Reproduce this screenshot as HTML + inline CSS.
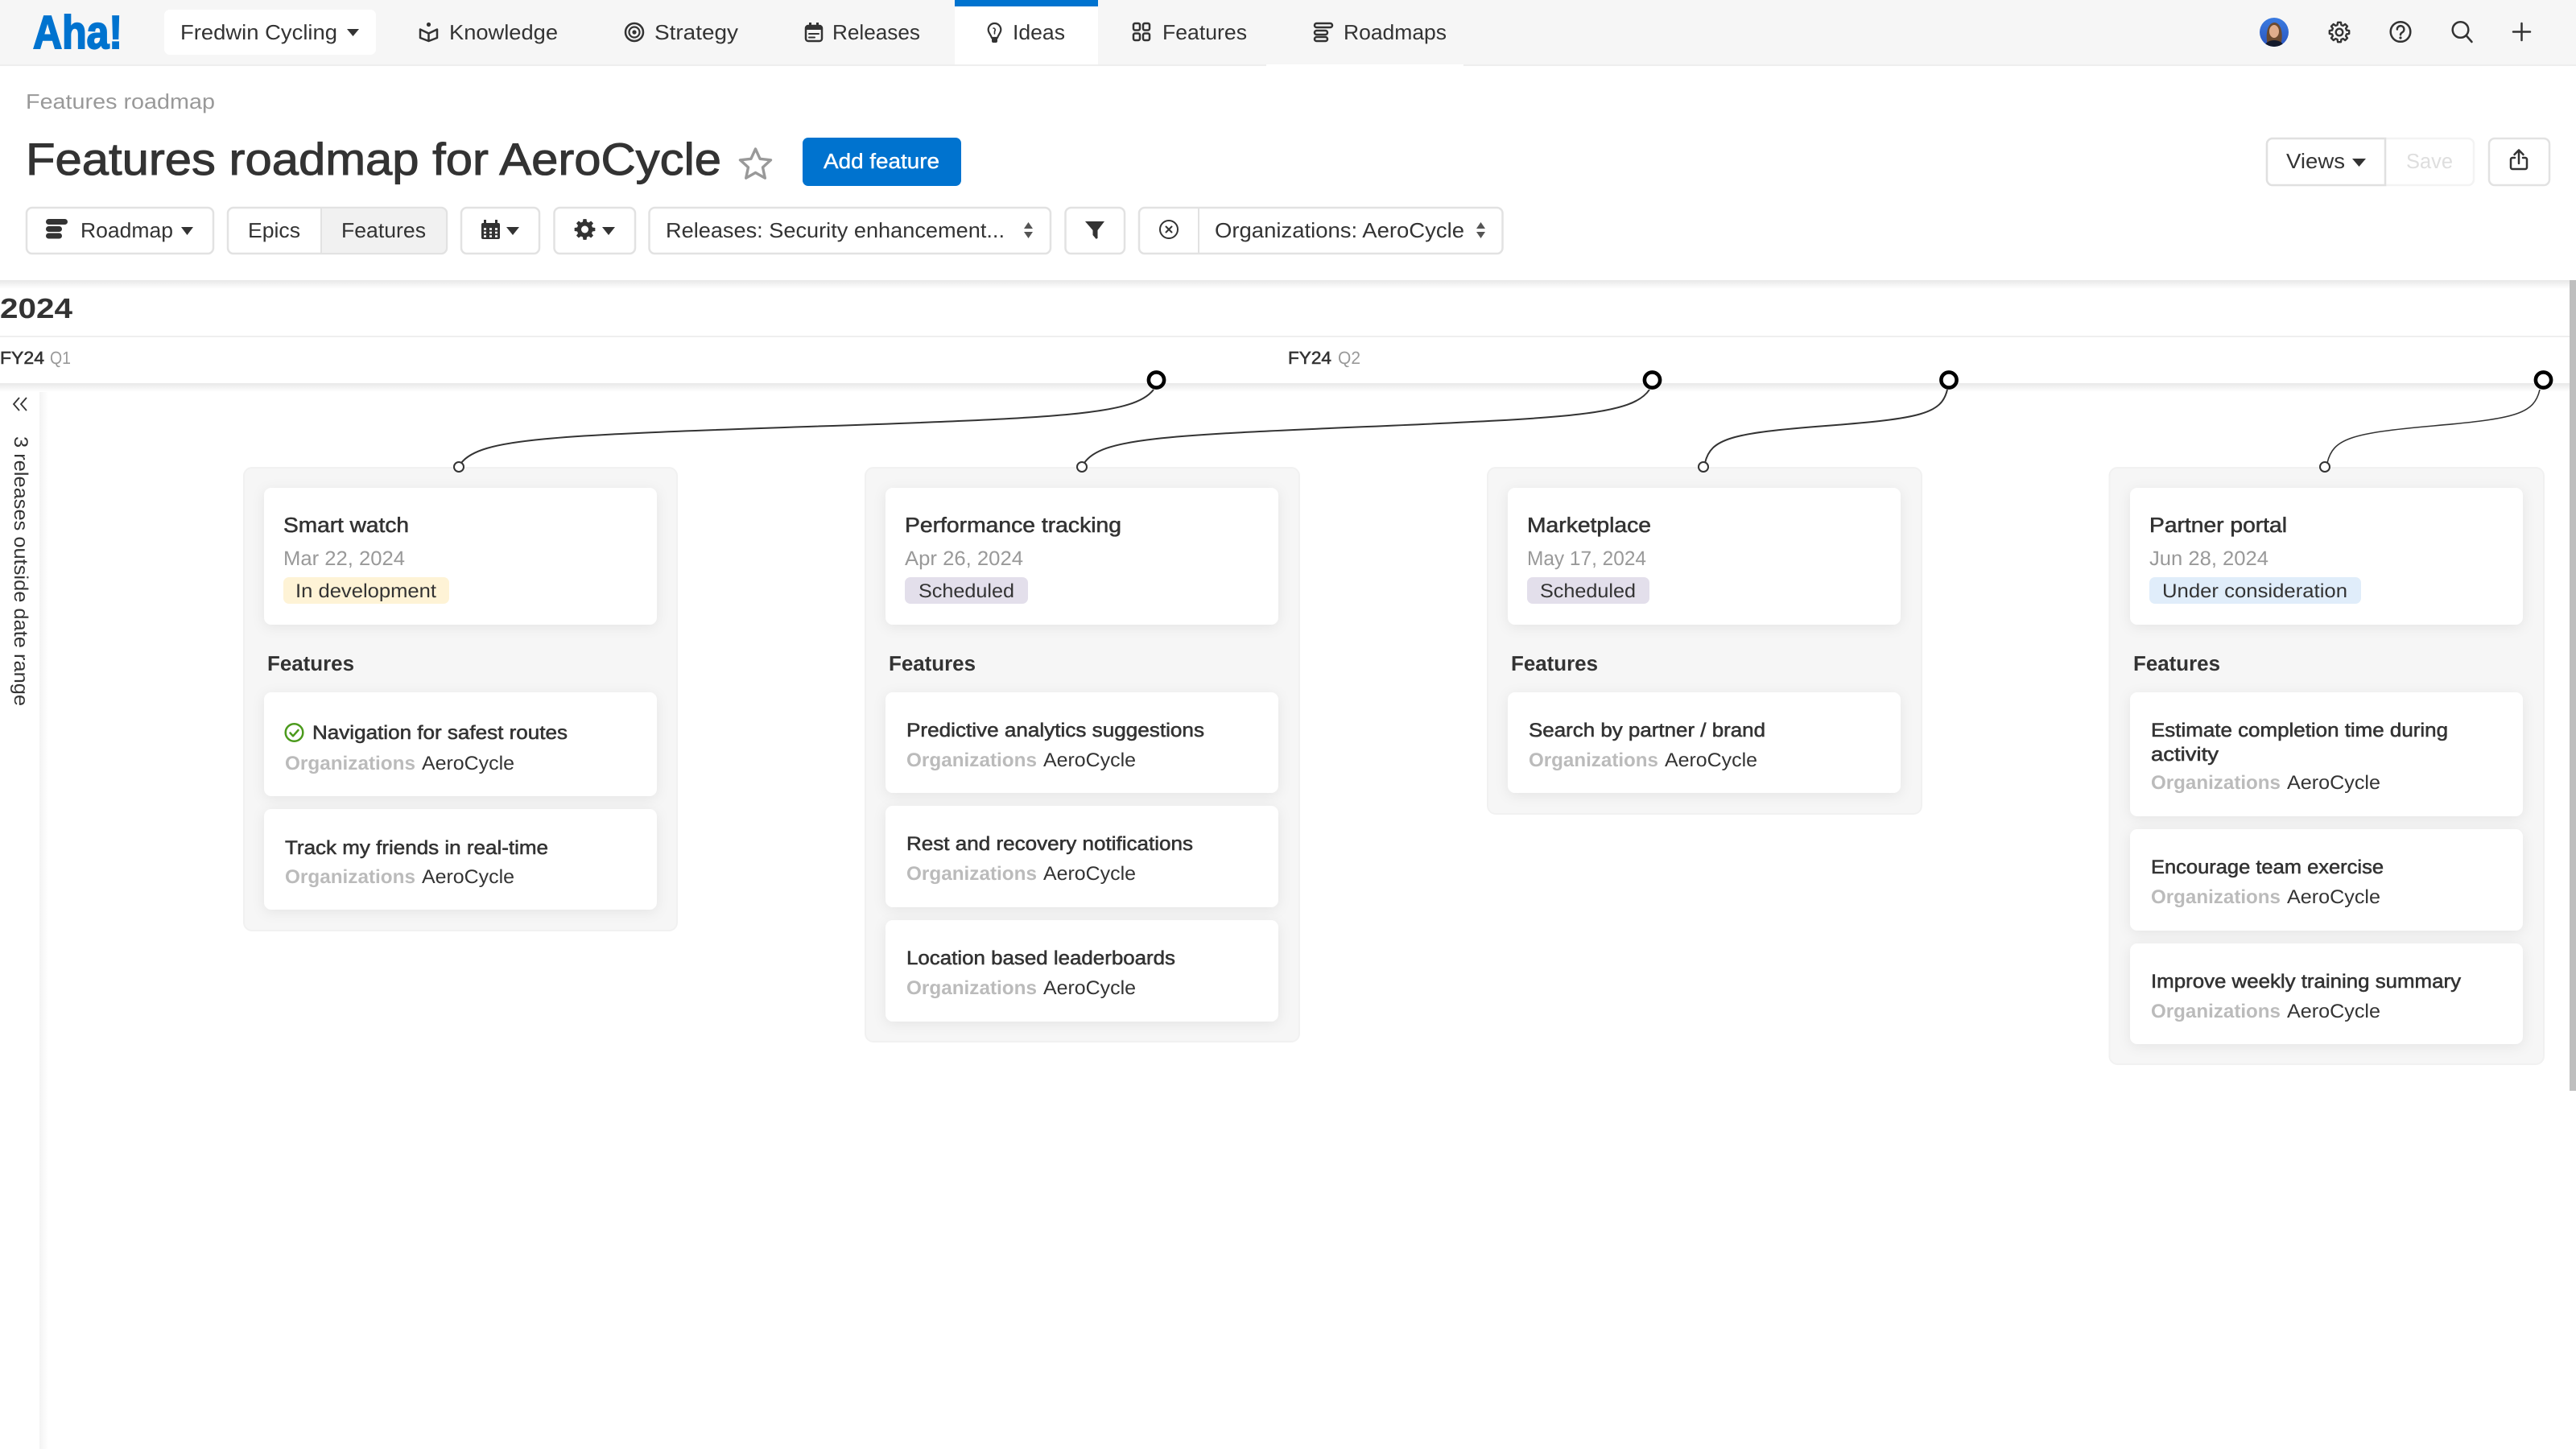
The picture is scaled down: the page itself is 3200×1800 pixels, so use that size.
<!DOCTYPE html>
<html lang="en">
<head>
<meta charset="utf-8">
<title>Features roadmap</title>
<style>
html,body{margin:0;padding:0;background:#fff;width:3200px;height:1800px;overflow:hidden}
svg{display:block;position:absolute;left:0;top:0}
text{font-family:"Liberation Sans",sans-serif;fill:#333;font-size:26px;text-rendering:geometricPrecision;white-space:pre}
.m{stroke:#333;stroke-width:.55px}
.b{font-weight:700}
.f{font-size:24px}
.g{fill:#999}
.o{fill:#bbb;font-weight:700;font-size:24px}
.grp{fill:#f6f6f6;stroke:#f1f1f1;stroke-width:2}
.card{fill:#fff;filter:drop-shadow(0 3px 8px rgba(0,0,0,.07))}
.btn{fill:#fff;stroke:#e2e2e2;stroke-width:2.5}
.ic{fill:none;stroke:#333;stroke-width:2.5;stroke-linecap:round;stroke-linejoin:round}
.fl{fill:#333}
.cv{fill:none;stroke:#333;stroke-width:2}
.big{fill:#fff;stroke:#000;stroke-width:4.6}
.sm{fill:#fff;stroke:#333;stroke-width:2}
</style>
</head>
<body>
<svg width="3200" height="1800" viewBox="0 0 3200 1800" xmlns="http://www.w3.org/2000/svg">
<defs>
<linearGradient id="sh" x1="0" y1="0" x2="0" y2="1"><stop offset="0" stop-color="#e8e8e8"/><stop offset="1" stop-color="#fff"/></linearGradient>
<linearGradient id="sh2" x1="0" y1="0" x2="1" y2="0"><stop offset="0" stop-color="#f3f3f3"/><stop offset="1" stop-color="#fff"/></linearGradient>
<linearGradient id="av" x1="0" y1="0" x2="0" y2="1"><stop offset="0" stop-color="#3a7be0"/><stop offset="1" stop-color="#2a55c0"/></linearGradient>
<clipPath id="avc"><circle cx="2825" cy="40" r="18"/></clipPath>
</defs>

<!-- nav -->
<rect x="0" y="0" width="3200" height="82" fill="#f6f6f6"/>
<rect x="0" y="80" width="3200" height="2" fill="#eeeeee"/>
<rect x="1573" y="80" width="245" height="2" fill="#fff"/>
<rect x="1186" y="0" width="178" height="80" fill="#fff"/>
<rect x="1186" y="0" width="178" height="8" fill="#0073cf"/>
<text x="41" y="60" textLength="111" lengthAdjust="spacingAndGlyphs" class="b" style="font-size:58px;fill:#0073cf;stroke:#0073cf;stroke-width:2px">Aha!</text>
<rect x="204" y="12" width="263" height="56" rx="7" fill="#fff"/>
<text x="224" y="49" textLength="195" lengthAdjust="spacingAndGlyphs">Fredwin Cycling</text>
<path class="fl" d="M431,36h15l-7.500,9z"/>

<path class="ic" d="M522,36.500l10.500,5 10.500,-5v10.500l-10.500,4 -10.500,-4zM532.500,41.500v9"/><circle class="fl" cx="532.500" cy="30.500" r="2.600"/>
<text x="558" y="49" textLength="135" lengthAdjust="spacingAndGlyphs">Knowledge</text>

<circle class="ic" cx="788" cy="40" r="11"/><circle class="ic" cx="788" cy="40" r="6.500" style="stroke-width:2.200"/><circle class="fl" cx="788" cy="40" r="2.600"/>
<text x="813" y="49" textLength="104" lengthAdjust="spacingAndGlyphs">Strategy</text>

<rect class="ic" x="1001" y="32" width="20" height="19" rx="3"/><path class="fl" d="M1001,32h20v5h-20zM1005,28h3v5h-3zM1014,28h3v5h-3z"/><path class="ic" style="stroke-width:2" d="M1005,42h12M1005,46.500h7"/>
<text x="1034" y="49" textLength="109" lengthAdjust="spacingAndGlyphs">Releases</text>

<path class="ic" style="stroke-width:2.200" d="M1235.500,29a7.800,7.800 0 0 0 -7.800,8c0,3.800 3.200,6 4.300,10h7c1.100,-4 4.300,-6.200 4.300,-10a7.800,7.800 0 0 0 -7.800,-8z"/><path class="fl" d="M1232,47h7v4a2,2 0 0 1 -2,2h-3a2,2 0 0 1 -2,-2z"/><path class="ic" style="stroke-width:1.600" d="M1234,35c2,0 3,2 1.500,4l0,3"/>
<text x="1258" y="49" textLength="65" lengthAdjust="spacingAndGlyphs">Ideas</text>

<rect class="ic" x="1408" y="29" width="8" height="8.500" rx="2"/><rect class="ic" x="1420" y="29" width="8" height="8.500" rx="2"/><rect class="ic" x="1408" y="41.500" width="8" height="8.500" rx="2"/><rect class="ic" x="1420" y="41.500" width="8" height="8.500" rx="2"/>
<text x="1444" y="49" textLength="105" lengthAdjust="spacingAndGlyphs">Features</text>

<rect class="ic" x="1633" y="29" width="22" height="5" rx="2.500"/><rect class="ic" x="1633" y="38" width="16" height="5" rx="2.500"/><rect class="ic" x="1633" y="46" width="16" height="5" rx="2.500"/>
<text x="1669" y="49" textLength="128" lengthAdjust="spacingAndGlyphs">Roadmaps</text>

<!-- right nav icons -->
<g clip-path="url(#avc)">
<rect x="2807" y="22" width="36" height="36" fill="url(#av)"/>
<path fill="#6b4a30" d="M2817,56c-3,-12 -1,-27 8,-28c9,0 12,15 8,28z"/>
<ellipse cx="2825" cy="39" rx="6" ry="8" fill="#e0ad8c"/>
<path fill="#141a2c" d="M2812,60c1,-7 7,-10 13,-10s12,3 13,10z"/>
</g>
<g transform="translate(2906,40) scale(.95)"><path class="ic" d="M9.470,-2.540L12.840,-2.030L12.840,2.030L9.470,2.540L8.490,4.900L10.520,7.640L7.640,10.520L4.900,8.490L2.540,9.470L2.030,12.840L-2.030,12.840L-2.540,9.470L-4.900,8.490L-7.640,10.520L-10.520,7.640L-8.490,4.900L-9.470,2.540L-12.840,2.030L-12.840,-2.030L-9.470,-2.540L-8.490,-4.900L-10.520,-7.640L-7.640,-10.520L-4.900,-8.490L-2.540,-9.470L-2.030,-12.840L2.030,-12.840L2.540,-9.470L4.900,-8.490L7.640,-10.520L10.520,-7.640L8.490,-4.900Z"/><circle class="ic" r="4.500"/></g>
<circle class="ic" cx="2982" cy="39.500" r="12.300"/><path class="ic" d="M2977.800,36.500a4.300,4.300 0 1 1 6.400,3.700c-1.400,.8 -2.200,1.500 -2.200,3"/><circle class="fl" cx="2982" cy="47" r="1.600"/>
<circle class="ic" cx="3056.500" cy="37" r="9.800"/><path class="ic" d="M3063.500,44l7,8"/>
<path class="ic" d="M3132.500,29v21M3122,39.500h21"/>

<!-- breadcrumb + title -->
<text x="32" y="135" textLength="235" lengthAdjust="spacingAndGlyphs" class="g">Features roadmap</text>
<text x="32" y="217" textLength="864" lengthAdjust="spacingAndGlyphs" style="font-size:56px;stroke:#333;stroke-width:1px">Features roadmap for AeroCycle</text>
<path d="M938.500,185L944.100,197.300L957.500,198.800L947.500,207.900L950.300,221.200L938.500,214.500L926.700,221.200L929.500,207.900L919.500,198.800L932.900,197.300Z" fill="none" stroke="#999" stroke-width="3.400" stroke-linejoin="round"/>

<rect x="997" y="171" width="197" height="60" rx="7" fill="#0073cf"/>
<text x="1023" y="209" textLength="144" lengthAdjust="spacingAndGlyphs" style="fill:#fff;stroke:#fff;stroke-width:.4px">Add feature</text>

<!-- views -->
<rect class="btn" x="2816" y="172" width="257" height="58" rx="7" style="stroke:#f3f3f3"/>
<path d="M2823,172h140v58h-140a7,7 0 0 1 -7,-7v-44a7,7 0 0 1 7,-7z" fill="#fff" stroke="#e0e0e0" stroke-width="2.500"/>
<text x="2840" y="209" textLength="73" lengthAdjust="spacingAndGlyphs">Views</text>
<path class="fl" d="M2922,197h17l-8.500,10z"/>
<text x="2989" y="209" textLength="58" lengthAdjust="spacingAndGlyphs" style="fill:#dedede">Save</text>
<rect class="btn" x="3092" y="172" width="75" height="58" rx="7"/>
<path class="ic" d="M3124,196h-3a2,2 0 0 0 -2,2v10a2,2 0 0 0 2,2h16a2,2 0 0 0 2,-2v-10a2,2 0 0 0 -2,-2h-3M3129,203v-16M3123.500,192l5.500,-5.500 5.500,5.500"/>

<!-- toolbar -->
<rect class="btn" x="33" y="258" width="232" height="57" rx="7"/>
<rect class="fl" x="57" y="272" width="27" height="7" rx="3.500"/><rect class="fl" x="57" y="281" width="20" height="7" rx="3.500"/><rect class="fl" x="57" y="289.500" width="20" height="7" rx="3.500"/>
<text x="100" y="295" textLength="115" lengthAdjust="spacingAndGlyphs">Roadmap</text>
<path class="fl" d="M225,282h15l-7.500,10z"/>

<rect class="btn" x="283" y="258" width="272" height="57" rx="7"/>
<path d="M399,259.200h149a6,6 0 0 1 6,6v42.600a6,6 0 0 1 -6,6h-149z" fill="#f1f1f1"/>
<path d="M399,258v57" stroke="#e2e2e2" stroke-width="2"/>
<text x="308" y="295" textLength="65" lengthAdjust="spacingAndGlyphs">Epics</text>
<text x="424" y="295" textLength="105" lengthAdjust="spacingAndGlyphs">Features</text>

<rect class="btn" x="573" y="258" width="97" height="57" rx="7"/>
<path class="fl" d="M601,273h3v4h11v-4h3v4h1a2,2 0 0 1 2,2v16a2,2 0 0 1 -2,2h-19a2,2 0 0 1 -2,-2v-16a2,2 0 0 1 2,-2h1z"/>
<path d="M601,284.500h3M608,284.500h3M615,284.500h3M601,289h3M608,289h3M615,289h3M601,293.500h3M608,293.500h3M615,293.500h3" stroke="#fff" stroke-width="2.500"/>
<path class="fl" d="M629,282h16l-8,10z"/>

<rect class="btn" x="688.500" y="258" width="100.500" height="57" rx="7"/>
<g transform="translate(726.500,285)"><path class="fl" d="M9.470,-2.540L12.840,-2.030L12.840,2.030L9.470,2.540L8.490,4.900L10.520,7.640L7.640,10.520L4.900,8.490L2.540,9.470L2.030,12.840L-2.030,12.840L-2.540,9.470L-4.900,8.490L-7.640,10.520L-10.520,7.640L-8.490,4.900L-9.470,2.540L-12.840,2.030L-12.840,-2.030L-9.470,-2.540L-8.490,-4.900L-10.520,-7.640L-7.640,-10.520L-4.900,-8.490L-2.540,-9.470L-2.030,-12.840L2.030,-12.840L2.540,-9.470L4.900,-8.490L7.640,-10.520L10.520,-7.640L8.490,-4.900Z"/><circle r="4.500" fill="#fff"/></g>
<path class="fl" d="M748,282h16l-8,10z"/>

<rect class="btn" x="806.500" y="258" width="498.500" height="57" rx="7"/>
<text x="827" y="295" textLength="421" lengthAdjust="spacingAndGlyphs">Releases: Security enhancement...</text>
<path fill="#555" d="M1277.500,276l5.500,8h-11zM1277.500,296l-5.500,-8h11z"/>

<rect class="btn" x="1323.500" y="258" width="73.500" height="57" rx="7"/>
<path class="fl" d="M1348,275h24l-8.500,11v8.500a1.500,1.500 0 0 1 -3,1l-3,-3.500v-6z"/>

<rect class="btn" x="1415" y="258" width="451.500" height="57" rx="7"/>
<path d="M1489,258v57" stroke="#e2e2e2" stroke-width="2"/>
<circle class="ic" cx="1452" cy="285" r="11" style="stroke-width:2"/><path class="ic" style="stroke-width:2" d="M1448.500,281.500l7,7M1455.500,281.500l-7,7"/>
<text x="1509" y="295" textLength="310" lengthAdjust="spacingAndGlyphs">Organizations: AeroCycle</text>
<path fill="#555" d="M1839.500,276l5.500,8h-11zM1839.500,296l-5.500,-8h11z"/>

<!-- timeline header -->
<rect x="0" y="348" width="3192" height="11" fill="url(#sh)"/>
<text x="0" y="395" textLength="90" lengthAdjust="spacingAndGlyphs" class="b" style="font-size:35px">2024</text>
<rect x="0" y="417" width="3192" height="2" fill="#efefef"/>
<text x="0" y="452" textLength="55" lengthAdjust="spacingAndGlyphs" class="m" style="font-size:22px">FY24</text>
<text x="62" y="452" textLength="26" lengthAdjust="spacingAndGlyphs" class="g" style="font-size:22px">Q1</text>
<text x="1600" y="452" textLength="54" lengthAdjust="spacingAndGlyphs" class="m" style="font-size:22px">FY24</text>
<text x="1662" y="452" textLength="28" lengthAdjust="spacingAndGlyphs" class="g" style="font-size:22px">Q2</text>
<rect x="0" y="476" width="3192" height="11" fill="url(#sh)"/>

<!-- sidebar -->
<rect x="49" y="487" width="11" height="1313" fill="url(#sh2)"/>
<path d="M24,494l-7,8 7,8M33,494l-7,8 7,8" fill="none" stroke="#333" stroke-width="1.800"/>
<text transform="translate(18,542) rotate(90)" x="0" y="0" textLength="335" lengthAdjust="spacingAndGlyphs" style="font-size:24px">3 releases outside date range</text>

<!-- groups -->
<rect class="grp" x="303" y="581" width="538" height="575" rx="10"/>
<rect class="grp" x="1075" y="581" width="539" height="713" rx="10"/>
<rect class="grp" x="1848" y="581" width="539" height="430" rx="10"/>
<rect class="grp" x="2620.500" y="581" width="539.500" height="741" rx="10"/>

<!-- connectors -->
<path class="cv" d="M573,575C597,545 680,541 1003,530C1326,519 1409,515 1433,484"/>
<path class="cv" d="M1347,575C1368,545 1440,541 1698,530C1956,519 2028,515 2049,484"/>
<path class="cv" d="M2118,575C2125,545 2150,538 2268,529C2386,520 2412,514 2419,484"/>
<path class="cv" style="stroke-width:1.600" d="M2891,575C2898,545 2920,538 3023,529C3126,520 3148,514 3155,484"/>
<circle class="big" cx="1436.500" cy="472" r="9.600"/><circle class="big" cx="2052.500" cy="472" r="9.600"/><circle class="big" cx="2421" cy="472" r="9.600"/><circle class="big" cx="3159.500" cy="472" r="9.600"/>
<circle class="sm" cx="570" cy="580" r="6"/><circle class="sm" cx="1344" cy="580" r="6"/><circle class="sm" cx="2116" cy="580" r="6"/><circle class="sm" cx="2888" cy="580" r="6"/>

<!-- column 1 -->
<rect class="card" x="328" y="606" width="488" height="170" rx="9"/>
<text x="352" y="661" textLength="156" lengthAdjust="spacingAndGlyphs" class="m">Smart watch</text>
<text x="352" y="702" textLength="151" lengthAdjust="spacingAndGlyphs" class="g" style="font-size:25px">Mar 22, 2024</text>
<rect x="352" y="717" width="206" height="33" rx="7" fill="#fef3d6"/>
<text x="367" y="742" textLength="175" lengthAdjust="spacingAndGlyphs" class="f">In development</text>
<text x="332" y="833" textLength="108" lengthAdjust="spacingAndGlyphs" class="b">Features</text>
<rect class="card" x="328" y="860" width="488" height="129" rx="9"/>
<circle cx="365.500" cy="910" r="10.800" fill="none" stroke="#4b9a1c" stroke-width="2.500"/><path d="M360.500,910.500l3.500,3.800 6.500,-7.300" fill="none" stroke="#4b9a1c" stroke-width="2.500" stroke-linecap="round" stroke-linejoin="round"/>
<text x="388" y="918" textLength="317" lengthAdjust="spacingAndGlyphs" class="f m">Navigation for safest routes</text>
<text x="354" y="956" textLength="162" lengthAdjust="spacingAndGlyphs" class="o">Organizations</text>
<text x="524" y="956" textLength="115" lengthAdjust="spacingAndGlyphs" class="f">AeroCycle</text>
<rect class="card" x="328" y="1005" width="488" height="125" rx="9"/>
<text x="354" y="1061" textLength="327" lengthAdjust="spacingAndGlyphs" class="f m">Track my friends in real-time</text>
<text x="354" y="1097" textLength="162" lengthAdjust="spacingAndGlyphs" class="o">Organizations</text>
<text x="524" y="1097" textLength="115" lengthAdjust="spacingAndGlyphs" class="f">AeroCycle</text>

<!-- column 2 -->
<rect class="card" x="1100" y="606" width="488" height="170" rx="9"/>
<text x="1124" y="661" textLength="269" lengthAdjust="spacingAndGlyphs" class="m">Performance tracking</text>
<text x="1124" y="702" textLength="147" lengthAdjust="spacingAndGlyphs" class="g" style="font-size:25px">Apr 26, 2024</text>
<rect x="1124" y="717" width="153" height="33" rx="7" fill="#e3dfeb"/>
<text x="1141" y="742" textLength="119" lengthAdjust="spacingAndGlyphs" class="f">Scheduled</text>
<text x="1104" y="833" textLength="108" lengthAdjust="spacingAndGlyphs" class="b">Features</text>
<rect class="card" x="1100" y="860" width="488" height="125" rx="9"/>
<text x="1126" y="915" textLength="370" lengthAdjust="spacingAndGlyphs" class="f m">Predictive analytics suggestions</text>
<text x="1126" y="952" textLength="162" lengthAdjust="spacingAndGlyphs" class="o">Organizations</text>
<text x="1296" y="952" textLength="115" lengthAdjust="spacingAndGlyphs" class="f">AeroCycle</text>
<rect class="card" x="1100" y="1001" width="488" height="126" rx="9"/>
<text x="1126" y="1056" textLength="356" lengthAdjust="spacingAndGlyphs" class="f m">Rest and recovery notifications</text>
<text x="1126" y="1093" textLength="162" lengthAdjust="spacingAndGlyphs" class="o">Organizations</text>
<text x="1296" y="1093" textLength="115" lengthAdjust="spacingAndGlyphs" class="f">AeroCycle</text>
<rect class="card" x="1100" y="1143" width="488" height="126" rx="9"/>
<text x="1126" y="1198" textLength="334" lengthAdjust="spacingAndGlyphs" class="f m">Location based leaderboards</text>
<text x="1126" y="1235" textLength="162" lengthAdjust="spacingAndGlyphs" class="o">Organizations</text>
<text x="1296" y="1235" textLength="115" lengthAdjust="spacingAndGlyphs" class="f">AeroCycle</text>

<!-- column 3 -->
<rect class="card" x="1873" y="606" width="488" height="170" rx="9"/>
<text x="1897" y="661" textLength="154" lengthAdjust="spacingAndGlyphs" class="m">Marketplace</text>
<text x="1897" y="702" textLength="148" lengthAdjust="spacingAndGlyphs" class="g" style="font-size:25px">May 17, 2024</text>
<rect x="1897" y="717" width="152" height="33" rx="7" fill="#e3dfeb"/>
<text x="1913" y="742" textLength="119" lengthAdjust="spacingAndGlyphs" class="f">Scheduled</text>
<text x="1877" y="833" textLength="108" lengthAdjust="spacingAndGlyphs" class="b">Features</text>
<rect class="card" x="1873" y="860" width="488" height="125" rx="9"/>
<text x="1899" y="915" textLength="294" lengthAdjust="spacingAndGlyphs" class="f m">Search by partner / brand</text>
<text x="1899" y="952" textLength="161" lengthAdjust="spacingAndGlyphs" class="o">Organizations</text>
<text x="2068" y="952" textLength="115" lengthAdjust="spacingAndGlyphs" class="f">AeroCycle</text>

<!-- column 4 -->
<rect class="card" x="2646" y="606" width="488" height="170" rx="9"/>
<text x="2670" y="661" textLength="171" lengthAdjust="spacingAndGlyphs" class="m">Partner portal</text>
<text x="2670" y="702" textLength="148" lengthAdjust="spacingAndGlyphs" class="g" style="font-size:25px">Jun 28, 2024</text>
<rect x="2670" y="717" width="263" height="33" rx="7" fill="#e0edfa"/>
<text x="2686" y="742" textLength="230" lengthAdjust="spacingAndGlyphs" class="f">Under consideration</text>
<text x="2650" y="833" textLength="108" lengthAdjust="spacingAndGlyphs" class="b">Features</text>
<rect class="card" x="2646" y="860" width="488" height="154" rx="9"/>
<text x="2672" y="915" textLength="369" lengthAdjust="spacingAndGlyphs" class="f m">Estimate completion time during</text>
<text x="2672" y="945" textLength="84" lengthAdjust="spacingAndGlyphs" class="f m">activity</text>
<text x="2672" y="980" textLength="161" lengthAdjust="spacingAndGlyphs" class="o">Organizations</text>
<text x="2841" y="980" textLength="116" lengthAdjust="spacingAndGlyphs" class="f">AeroCycle</text>
<rect class="card" x="2646" y="1030" width="488" height="126" rx="9"/>
<text x="2672" y="1085" textLength="289" lengthAdjust="spacingAndGlyphs" class="f m">Encourage team exercise</text>
<text x="2672" y="1122" textLength="161" lengthAdjust="spacingAndGlyphs" class="o">Organizations</text>
<text x="2841" y="1122" textLength="116" lengthAdjust="spacingAndGlyphs" class="f">AeroCycle</text>
<rect class="card" x="2646" y="1172" width="488" height="125" rx="9"/>
<text x="2672" y="1227" textLength="385" lengthAdjust="spacingAndGlyphs" class="f m">Improve weekly training summary</text>
<text x="2672" y="1264" textLength="161" lengthAdjust="spacingAndGlyphs" class="o">Organizations</text>
<text x="2841" y="1264" textLength="116" lengthAdjust="spacingAndGlyphs" class="f">AeroCycle</text>

<!-- scrollbar -->
<rect x="3192" y="348" width="8" height="1007" fill="#bfbfbf"/>
</svg>
</body>
</html>
